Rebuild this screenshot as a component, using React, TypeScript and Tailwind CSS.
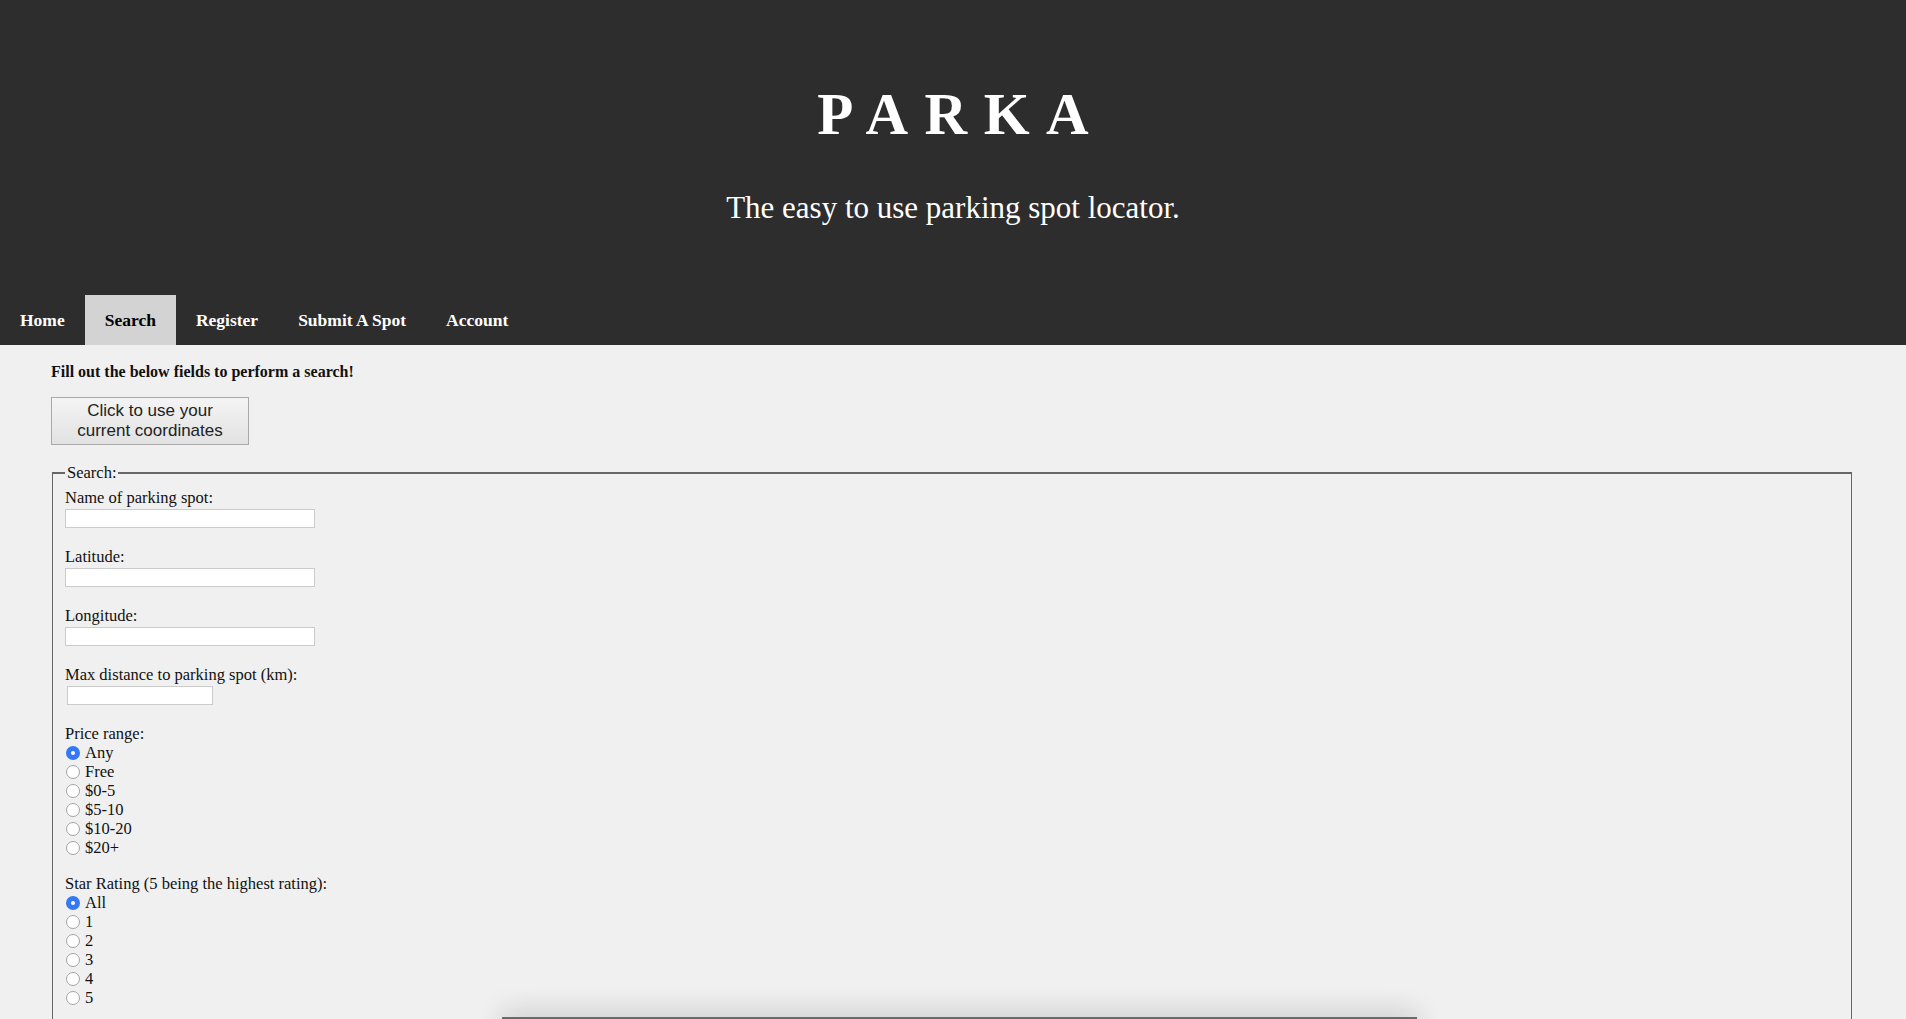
import React from 'react';

const serif = "font-['Liberation_Serif','Times_New_Roman',serif]";

const navItems = ['Home', 'Search', 'Register', 'Submit A Spot', 'Account'];
const priceOptions = ['Any', 'Free', '$0-5', '$5-10', '$10-20', '$20+'];
const starOptions = ['All', '1', '2', '3', '4', '5'];

function Radio({ label, checked }: { label: string; checked?: boolean }) {
  return (
    <label className="flex items-center h-[19px] leading-[19px]">
      {checked ? (
        <span className="w-[14px] h-[14px] rounded-full bg-[#3478f6] flex items-center justify-center ml-[1px]">
          <span className="w-[4px] h-[4px] rounded-full bg-white"></span>
        </span>
      ) : (
        <span className="w-[14px] h-[14px] rounded-full bg-white border border-[#a4a4a4] ml-[1px]"></span>
      )}
      <span className="ml-[5px]">{label}</span>
    </label>
  );
}

function Field({ label, inputClass }: { label: string; inputClass: string }) {
  return (
    <div className="mb-[19px]">
      <div className="leading-[19px]">{label}</div>
      <input type="text" className={`block mt-[2px] h-[19px] bg-white border border-[#cbcbcb] outline-none ${inputClass}`} />
    </div>
  );
}

export default function App() {
  return (
    <main className={`min-h-screen bg-[#f0f0f0] text-[#111] ${serif}`}>
      {/* Header */}
      <header className="bg-[#2d2d2d] text-white pt-[79px]">
        <h1 className="text-center text-[59px] leading-[70px] tracking-[0.28em] pl-[0.28em] font-bold">PARKA</h1>
        <p className="text-center text-[31px] leading-[36px] mt-[41px]">The easy to use parking spot locator.</p>
        <nav className="flex mt-[69px]">
          {navItems.map((item) => (
            <a
              key={item}
              className={`px-[20px] pt-[15px] pb-[15px] leading-[20px] text-[17.5px] font-bold ${item === 'Search' ? 'bg-[#d3d3d3] text-black' : 'text-white'}`}
            >
              {item}
            </a>
          ))}
        </nav>
      </header>

      {/* Search form */}
      <div className="pl-[51px] pr-[54px] pt-[17px] text-[16.5px]">
        <p className="font-bold leading-[19px] text-[16px]">Fill out the below fields to perform a search!</p>
        <button className="mt-[16px] w-[198px] h-[48px] border border-[#a9a9a9] bg-gradient-to-b from-[#f4f4f4] to-[#e2e2e2] text-[#222] text-[17px] leading-[20px] font-['Liberation_Sans',Arial,sans-serif]">
          Click to use your
          <br />
          current coordinates
        </button>

        <fieldset className="mt-[18px] ml-[1px] border-t-2 border-x-[1.5px] border-b-0 border-[#666] pl-[12px] pb-[60px]">
          <legend className="px-[2px] leading-[19px]">Search:</legend>
          <div className="pt-[6px]">
            <Field label="Name of parking spot:" inputClass="w-[250px]" />
            <Field label="Latitude:" inputClass="w-[250px]" />
            <Field label="Longitude:" inputClass="w-[250px]" />
            <Field label="Max distance to parking spot (km):" inputClass="w-[146px] ml-[2px]" />

            <div className="mb-[17px]">
              <div className="leading-[19px]">Price range:</div>
              {priceOptions.map((opt, i) => (
                <Radio key={opt} label={opt} checked={i === 0} />
              ))}
            </div>

            <div>
              <div className="leading-[19px]">Star Rating (5 being the highest rating):</div>
              {starOptions.map((opt, i) => (
                <Radio key={opt} label={opt} checked={i === 0} />
              ))}
            </div>
          </div>
        </fieldset>
      </div>

      {/* Floating panel peeking at the bottom */}
      <div className="fixed left-[502px] top-[1017px] w-[915px] h-[40px] border-t-2 border-[#6a6a6a] bg-[#efefef] shadow-[0_-6px_28px_rgba(0,0,0,0.14)]"></div>
    </main>
  );
}
